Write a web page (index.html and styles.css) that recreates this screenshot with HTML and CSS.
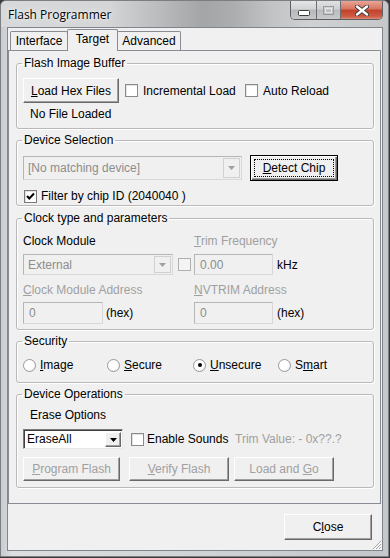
FILE: index.html
```html
<!DOCTYPE html>
<html>
<head>
<meta charset="utf-8">
<link rel="stylesheet" href="styles.css">
</head>
<body>
<div class="window">
  <div class="titlebar">
    <span class="title">Flash Programmer</span>
    <div class="caption">
      <div class="cbtn cmin"><svg width="12" height="6" viewBox="0 0 12 6"><rect x="0.5" y="0.5" width="11" height="5" rx="1" fill="#fff" stroke="#3c3c3c"/></svg></div>
      <div class="cbtn cmax"><svg width="11" height="9" viewBox="0 0 11 9"><rect x="0.5" y="0.5" width="10" height="8" fill="none" stroke="#9a9a9a"/><rect x="2.5" y="2.5" width="6" height="4" fill="none" stroke="#e6e6e6"/></svg></div>
      <div class="cbtn cclose"><svg width="14" height="11" viewBox="0 0 14 11"><path d="M2 1.5 L12 9.5 M12 1.5 L2 9.5" stroke="#3a3a3a" stroke-width="4.2" stroke-linecap="round"/><path d="M2 1.5 L12 9.5 M12 1.5 L2 9.5" stroke="#fff" stroke-width="2.4" stroke-linecap="round"/></svg></div>
    </div>
  </div>
  <div class="client">
    <div class="tabs">
      <div class="tab t1">Interface</div>
      <div class="tab t2 active">Target</div>
      <div class="tab t3">Advanced</div>
    </div>
    <div class="panel">
      <fieldset class="group g1">
        <legend>Flash Image Buffer</legend>
        <div class="row r1">
          <button class="btn load"><u>L</u>oad Hex Files</button>
          <label class="chk w-inc"><span class="box"></span><span>Incremental Load</span></label>
          <label class="chk"><span class="box"></span><span>Auto Reload</span></label>
        </div>
        <div class="note">No File Loaded</div>
      </fieldset>

      <fieldset class="group g2">
        <legend>Device Selection</legend>
        <div class="row r1">
          <div class="combo disabled dev"><span class="ctext">[No matching device]</span><span class="arrow"><svg width="7" height="4" viewBox="0 0 7 4"><path d="M0 0 H7 L3.5 4 Z" fill="#a0a0a0"/></svg></span></div>
          <button class="btn default detect"><u>D</u>etect Chip</button>
        </div>
        <label class="chk filter"><span class="box checked"><svg width="11" height="11" viewBox="0 0 11 11"><path d="M2 5 L4.3 7.5 L9 2.5" fill="none" stroke="#000" stroke-width="2"/></svg></span><span>Filter by chip ID (2040040 )</span></label>
      </fieldset>

      <fieldset class="group g3">
        <legend>Clock type and parameters</legend>
        <div class="grid">
          <div class="lbl">Clock Module</div>
          <div class="lbl dis"><u>T</u>rim Frequency</div>
          <div class="cell">
            <div class="combo disabled clk"><span class="ctext">External</span><span class="arrow"><svg width="7" height="4" viewBox="0 0 7 4"><path d="M0 0 H7 L3.5 4 Z" fill="#a0a0a0"/></svg></span></div>
            <span class="box dbox"></span>
          </div>
          <div class="cell"><div class="tbox">0.00</div><span class="unit">kHz</span></div>
          <div class="lbl dis lbl2"><u>C</u>lock Module Address</div>
          <div class="lbl dis lbl2"><u>N</u>VTRIM Address</div>
          <div class="cell c2"><div class="tbox small">0</div><span class="unit hex">(hex)</span></div>
          <div class="cell c2"><div class="tbox">0</div><span class="unit">(hex)</span></div>
        </div>
      </fieldset>

      <fieldset class="group g4">
        <legend>Security</legend>
        <div class="row radios">
          <label class="radio w1"><span class="dot"></span><span><u>I</u>mage</span></label>
          <label class="radio w2"><span class="dot"></span><span><u>S</u>ecure</span></label>
          <label class="radio w3"><span class="dot on"></span><span><u>U</u>nsecure</span></label>
          <label class="radio"><span class="dot"></span><span>S<u>m</u>art</span></label>
        </div>
      </fieldset>

      <fieldset class="group g5">
        <legend>Device Operations</legend>
        <div class="note erase">Erase Options</div>
        <div class="row r-erase">
          <div class="combo erasecombo"><span class="ctext">EraseAll</span><span class="arrow raised"><svg width="7" height="4" viewBox="0 0 7 4"><path d="M0 0 H7 L3.5 4 Z" fill="#000"/></svg></span></div>
          <label class="chk w-snd"><span class="box"></span><span>Enable Sounds</span></label>
          <span class="dis">Trim Value: - 0x??.?</span>
        </div>
        <div class="row r-ops">
          <button class="btn disabled prog"><u>P</u>rogram Flash</button>
          <button class="btn disabled verify"><u>V</u>erify Flash</button>
          <button class="btn disabled lgo">Load and <u>G</u>o</button>
        </div>
      </fieldset>
    </div>
    <div class="footer">
      <button class="btn closebtn">C<u>l</u>ose</button>
    </div>
    <svg class="grip" width="11" height="11" viewBox="0 0 11 11">
      <path d="M10 2 L2 10 M10 5 L5 10 M10 8 L8 10" stroke="#a8a8a8" stroke-width="1"/>
      <path d="M11 3 L3 11 M11 6 L6 11 M11 9 L9 11" stroke="#fff" stroke-width="1"/>
    </svg>
  </div>
</div>
</body>
</html>
```
FILE: styles.css
```css
html, body {
  margin: 0;
  padding: 0;
  background: #3b3b3b;
}
body {
  width: 390px;
  height: 558px;
  overflow: hidden;
  font-family: "Liberation Sans", Arial, sans-serif;
  font-size: 12px;
  line-height: 14px;
  color: #000;
}
u { text-decoration: underline; text-underline-offset: 1px; }

.window {
  box-sizing: border-box;
  width: 389px;
  height: 557px;
  border: 1px solid #7b7f84;
  border-radius: 6px 6px 0 0;
  background: linear-gradient(90deg, #c9ccd0 0%, #dcdedf 3%, #c4c7cb 100%);
  display: flex;
  flex-direction: column;
}
.titlebar {
  height: 26px;
  flex: none;
  display: flex;
  align-items: flex-start;
  border-radius: 5px 5px 0 0;
  background: linear-gradient(90deg, #d8d9da 0%, #d4d5d6 28%, #bcbdbe 40%, #a4a5a6 52%, #acadae 60%, #c2c3c4 70%, #d0d1d2 80%, #c6c7c8 100%);
}
.title {
  font-family: "Open Sans", "Noto Sans", sans-serif;
  font-size: 12px;
  line-height: 16px;
  margin: 6px 0 0 7px;
  color: #000;
  text-shadow: 0 0 6px rgba(255,255,255,0.9), 0 0 2px rgba(255,255,255,0.9);
}
.caption {
  margin-left: auto;
  margin-right: 5px;
  display: flex;
  height: 18px;
  border: 1px solid #5c6065;
  border-top: none;
  border-radius: 0 0 5px 5px;
  overflow: hidden;
}
.cbtn {
  height: 18px;
  display: flex;
  align-items: center;
  justify-content: center;
  box-sizing: border-box;
}
.cmin {
  width: 26px;
  background: linear-gradient(#e4e5e6 0%, #d2d3d5 45%, #b6b8ba 50%, #c5c7c9 100%);
  border-right: 1px solid #6a6e73;
}
.cmin svg { margin-top: 5px; }
.cmax {
  width: 24px;
  background: linear-gradient(#e0e1e2 0%, #cfd0d2 45%, #b9bbbd 50%, #c8cacc 100%);
  border-right: 1px solid #6a6e73;
}
.cclose {
  width: 41px;
  background: linear-gradient(#e8a597 0%, #d8735f 45%, #c2412a 50%, #cc5a44 85%, #dd8a72 100%);
}

.client {
  position: relative;
  box-sizing: border-box;
  width: 376px;
  height: 524px;
  margin-left: 6px;
  border: 1px solid #80858b;
  background: #f0f0f0;
  display: flex;
  flex-direction: column;
}
.tabs {
  display: flex;
  align-items: flex-end;
  height: 22px;
  padding: 1px 0 0 2px;
  margin-bottom: -1px;
  position: relative;
  z-index: 1;
}
.tab {
  box-sizing: border-box;
  height: 19px;
  margin-bottom: 1px;
  border: 1px solid #898c95;
  border-bottom: none;
  background: #f0f0f0;
  text-align: center;
  line-height: 18px;
  border-radius: 2px 2px 0 0;
}
.t1 { width: 58px; }
.t2 { width: 51px; margin-left: -1px; }
.t3 { width: 64px; margin-left: -1px; }
.tab.active {
  height: 22px;
  margin-bottom: 0;
  line-height: 18px;
  position: relative;
  z-index: 2;
}
.panel {
  box-sizing: border-box;
  height: 454px;
  width: 373px;
  border: 1px solid #898c95;
  padding: 5px 6px 0 7px;
  background: #f0f0f0;
}

.group {
  margin: 0;
  padding: 0 6px;
  border: 1px solid #b9b9b9;
  border-radius: 3px;
  box-shadow: inset 1px 1px 0 #fff, 1px 1px 0 #fff;
}
.group legend {
  padding: 0 2px;
  margin-left: -1px;
  line-height: 14px;
}
.g1 { padding-bottom: 7px; }
.g2 { margin-top: 4px; padding-bottom: 2px; }
.g3 { margin-top: 5px; padding-bottom: 5px; }
.g4 { margin-top: 4px; padding-bottom: 10px; }
.g5 { margin-top: 4px; padding-bottom: 6px; }

.row { display: flex; align-items: center; }
.g1 .r1 { margin-top: 8px; height: 25px; }
.note { padding-left: 7px; }
.g1 .note { margin-top: 4px; }

.btn {
  box-sizing: border-box;
  font: inherit;
  line-height: 14px;
  color: #000;
  background: #f0f0f0;
  border: 1px solid;
  border-color: #fff #696969 #696969 #fff;
  box-shadow: inset -1px -1px 0 #a0a0a0;
  padding: 0;
  margin: 0;
  text-align: center;
  white-space: nowrap;
  flex: none;
}
.btn.disabled { color: #a0a0a0; }
.btn.default {
  border: 1px solid #000;
  box-shadow: inset 1px 1px 0 #fff, inset -1px -1px 0 #696969, inset -2px -2px 0 #a0a0a0;
  outline: 1px dotted #000;
  outline-offset: -5px;
}
.load { width: 96px; height: 25px; }

.chk { display: flex; align-items: center; }
.box {
  box-sizing: border-box;
  width: 13px;
  height: 13px;
  flex: none;
  border: 1px solid #8a8a8a;
  background: #fff;
  box-shadow: inset 1px 1px 0 #e2e2e2;
  display: flex;
  align-items: center;
  justify-content: center;
}
.box + span { margin-left: 5px; }
.g1 .chk { margin-left: 6px; }
.w-inc { width: 114px; }

.combo {
  box-sizing: border-box;
  display: flex;
  align-items: center;
  border: 1px solid;
  background: #fff;
}
.combo .ctext { flex: 1; padding-left: 4px; white-space: nowrap; }
.combo.disabled {
  background: #f0f0f0;
  border-color: #b5b5b5 #d8d8d8 #d8d8d8 #b5b5b5;
  color: #8d8d8d;
}
.arrow {
  box-sizing: border-box;
  width: 17px;
  align-self: stretch;
  margin: 1px;
  display: flex;
  align-items: center;
  justify-content: center;
  border: 1px solid #d0d0d0;
  background: #f0f0f0;
}
.arrow.raised {
  border-color: #fff #696969 #696969 #fff;
  box-shadow: inset -1px -1px 0 #a0a0a0;
}
.dev { width: 219px; height: 24px; }
.detect { width: 88px; height: 26px; margin-left: 8px; }
.g2 .r1 { margin-top: 8px; height: 26px; }
.filter { margin-top: 8px; padding-left: 1px; height: 14px; }
.filter .box { border-color: #7a7a7a; }
.filter .box + span { margin-left: 4px; }

.grid {
  display: grid;
  grid-template-columns: 171px 1fr;
  margin-top: 9px;
}
.lbl { line-height: 14px; }
.dis { color: #a0a0a0; }
.cell { display: flex; align-items: center; margin-top: 6px; height: 21px; margin-bottom: 8px; }
.cell.c2 { margin-top: 5px; margin-bottom: 0; height: 22px; }
.clk { width: 150px; height: 21px; }
.dbox { margin-left: 5px; background: #f4f4f4; border-color: #b0b0b0; box-shadow: none; }
.tbox {
  box-sizing: border-box;
  width: 79px;
  height: 100%;
  border: 1px solid;
  border-color: #b5b5b5 #d8d8d8 #d8d8d8 #b5b5b5;
  background: #f0f0f0;
  color: #8d8d8d;
  padding-left: 5px;
  display: flex;
  align-items: center;
}
.tbox.small { width: 80px; }
.unit { margin-left: 4px; }
.hex { margin-left: 3px; }

.radios { margin-top: 10px; height: 14px; }
.radio { display: flex; align-items: center; }
.w1 { width: 84px; }
.w2 { width: 86px; }
.w3 { width: 85px; }
.dot {
  box-sizing: border-box;
  width: 13px;
  height: 13px;
  border-radius: 50%;
  border: 1px solid #999;
  background: radial-gradient(circle at 40% 40%, #fff 0%, #fff 50%, #e4e4e4 100%);
  margin-right: 4px;
  display: flex;
  align-items: center;
  justify-content: center;
}
.dot.on::after {
  content: "";
  width: 4px;
  height: 4px;
  border-radius: 50%;
  background: #000;
}

.erase { margin-top: 7px; }
.r-erase { margin-top: 7px; height: 20px; }
.erasecombo {
  width: 100px;
  height: 20px;
  border-color: #7a7a7a #e8e8e8 #e8e8e8 #7a7a7a;
  box-shadow: inset 1px 1px 0 #404040;
}
.erasecombo .ctext { padding-left: 3px; }
.erasecombo .arrow { width: 16px; margin: 2px 1px 1px 1px; }
.w-snd { margin-left: 8px; width: 104px; }
.w-snd .box + span { margin-left: 3px; }
.r-ops { margin-top: 8px; height: 24px; }
.prog { width: 97px; height: 24px; }
.verify { width: 100px; height: 24px; margin-left: 9px; }
.lgo { width: 100px; height: 24px; margin-left: 5px; }

.footer {
  display: flex;
  justify-content: flex-end;
  padding: 10px 10px 0 0;
}
.closebtn { width: 88px; height: 26px; }
.grip {
  position: absolute;
  right: 0;
  bottom: 0;
}
```
